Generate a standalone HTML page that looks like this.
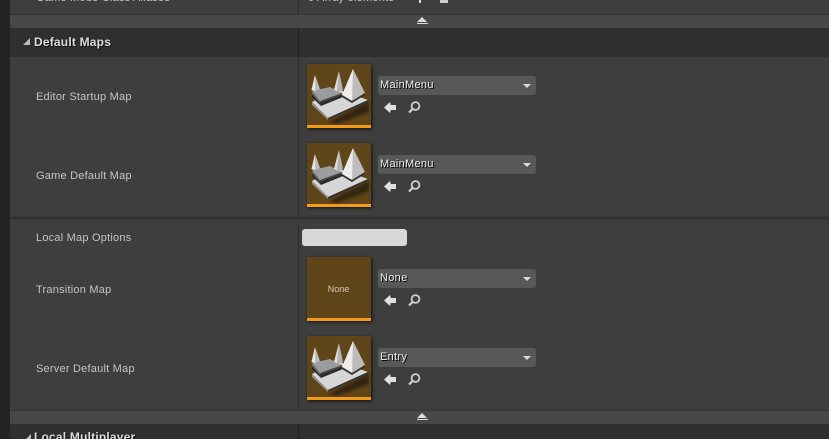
<!DOCTYPE html>
<html><head><meta charset="utf-8"><style>
html,body{margin:0;padding:0;background:#3e3e3e}
#p{position:relative;width:829px;height:439px;overflow:hidden;background:#3e3e3e;font-family:"Liberation Sans",sans-serif}
#p div,#p svg{position:absolute}
.l{left:36px;font-size:11px;color:#c4c4c4;line-height:14px;letter-spacing:.22px;white-space:nowrap}
.h{font-size:12px;font-weight:bold;color:#dcdcdc;text-shadow:1px 1px 0 #111;line-height:14px;white-space:nowrap;letter-spacing:.2px}
.c{left:378px;width:158px;height:19px;background:#585858;border-radius:3px}
.c span{position:absolute;left:2px;top:2px;font-size:11px;line-height:14px;letter-spacing:.3px;color:#eee;text-shadow:1px 1px 0 #000}
.c i{position:absolute;left:145px;top:8px;width:0;height:0;border-left:4.5px solid transparent;border-right:4.5px solid transparent;border-top:4px solid #ddd}
.t{left:307px;width:64px;height:64px;background:#5f4518;box-shadow:1px 1px 3px #111}
.o{left:0;bottom:0;width:64px;height:3px;background:#f39c1c}
.bar{left:10px;width:819px;height:13px;background:#484848;border-top:1px solid #333;border-radius:0 0 0 4px}
.tri{left:417px;width:0;height:0;border-left:5.5px solid transparent;border-right:5.5px solid transparent;border-bottom:5px solid #ddd}
.u{left:417px;width:11px;height:1px;background:#ddd}
</style></head><body><div id="p">
<svg width="0" height="0" style="left:0;top:0"><defs>
<filter id="bl"><feGaussianBlur stdDeviation="1.2"/></filter>
<g id="th">
<polygon points="22,58 62,38 62,48 30,60" fill="#1c1408" opacity=".65" filter="url(#bl)"/>
<polygon points="5,38 30,25 61,36 21,54" fill="#d6d6d6"/>
<polygon points="5,38 21,54 21,56 5,41" fill="#8e8e8e"/>
<polygon points="21,54 61,36 61,38 21,56" fill="#333"/>
<polygon points="5,30 14,38 36,30 36,33 14,42 5,33" fill="#2b2b2b"/>
<polygon points="5,27 23,23 35,29 13,37" fill="#9c9c9c"/>
<polygon points="5,27 13,37 13,39 5,30" fill="#6a6a6a"/>
<polygon points="13,37 35,29 35,31 13,39" fill="#444"/>
<polygon points="4.5,26 8,11 13,25 9,27" fill="#bcbcbc"/>
<polygon points="4.5,26 8,11 8,27" fill="#e6e6e6"/>
<polygon points="27,26 32,7 36,26 31,28" fill="#b2b2b2"/>
<polygon points="27,26 32,7 30,27" fill="#dcdcdc"/>
<polygon points="35,31 46,5 58,29 45,37" fill="#bdbdbd"/>
<polygon points="35,31 46,5 45,37" fill="#ececec"/>
<polygon points="35,31 45,37 58,29 58,31 45,39 35,33" fill="#2e2e2e"/>
</g>
<g id="ar"><polygon points="0,5.5 6,0 6.8,3 12,3 12,8 6.8,8 6,11" fill="#e0e0e0"/></g>
<g id="mg"><circle cx="7.5" cy="5" r="3.9" fill="none" stroke="#cfcfcf" stroke-width="1.8"/><line x1="4.5" y1="8" x2="1" y2="11.5" stroke="#cfcfcf" stroke-width="2.2"/></g>
</defs></svg>

<div style="left:0;top:0;width:10px;height:439px;background:#232323"></div>
<div style="left:298px;top:0;width:1px;height:14px;background:#2c2c2c"></div>
<div class="l" style="top:-9px">Game Mode Class Aliases</div>
<div class="l" style="left:308px;top:-9px">0 Array elements</div>
<div style="left:419px;top:-2px;width:2px;height:5px;background:#ddd"></div>
<div style="left:440px;top:-2px;width:8px;height:5px;background:#ccc"></div>

<div class="bar" style="top:14px"></div>
<div class="tri" style="top:17px"></div><div class="u" style="top:23px"></div>

<div style="left:10px;top:28px;width:819px;height:29px;background:#2f2f2f"></div>
<div style="left:298px;top:28px;width:1px;height:29px;background:#1f1f1f"></div>
<svg style="left:23px;top:38px" width="7" height="7"><polygon points="0,7 7,0 7,7" fill="#bbb"/></svg>
<div class="h" style="left:34px;top:35px">Default Maps</div>

<div style="left:298px;top:57px;width:1px;height:158px;background:#2c2c2c"></div>
<div style="left:10px;top:215px;width:819px;height:5px;background:linear-gradient(#3d3d3d,#363636 40%,#2e2e2e 70%,#3e3e3e)"></div>
<div style="left:298px;top:225px;width:1px;height:182px;background:#2c2c2c"></div>

<div class="l" style="top:90px">Editor Startup Map</div>
<div class="t" style="top:64px"><svg style="left:0;top:0" width="64" height="61"><use href="#th"/></svg><div class="o"></div></div>
<div class="c" style="top:76px"><span>MainMenu</span><i></i></div>
<svg style="left:384px;top:102px" width="13" height="12"><use href="#ar"/></svg>
<svg style="left:408px;top:101px" width="13" height="13"><use href="#mg"/></svg>

<div class="l" style="top:169px">Game Default Map</div>
<div class="t" style="top:143px"><svg style="left:0;top:0" width="64" height="61"><use href="#th"/></svg><div class="o"></div></div>
<div class="c" style="top:155px"><span>MainMenu</span><i></i></div>
<svg style="left:384px;top:181px" width="13" height="12"><use href="#ar"/></svg>
<svg style="left:408px;top:180px" width="13" height="13"><use href="#mg"/></svg>

<div class="l" style="top:231px">Local Map Options</div>
<div style="left:302px;top:229px;width:105px;height:17px;background:#d8d8d8;border-radius:3px"></div>

<div class="l" style="top:283px">Transition Map</div>
<div class="t" style="top:257px"><div style="left:0;top:26px;width:63px;text-align:center;font-size:9px;line-height:12px;color:#d4cbb8">None</div><div class="o"></div></div>
<div class="c" style="top:269px"><span>None</span><i></i></div>
<svg style="left:384px;top:295px" width="13" height="12"><use href="#ar"/></svg>
<svg style="left:408px;top:294px" width="13" height="13"><use href="#mg"/></svg>

<div class="l" style="top:362px">Server Default Map</div>
<div class="t" style="top:336px"><svg style="left:0;top:0" width="64" height="61"><use href="#th"/></svg><div class="o"></div></div>
<div class="c" style="top:348px"><span>Entry</span><i></i></div>
<svg style="left:384px;top:374px" width="13" height="12"><use href="#ar"/></svg>
<svg style="left:408px;top:373px" width="13" height="13"><use href="#mg"/></svg>

<div class="bar" style="top:410px"></div>
<div class="tri" style="top:413px"></div><div class="u" style="top:419px"></div>

<div style="left:10px;top:424px;width:819px;height:15px;background:#2f2f2f"></div>
<div style="left:298px;top:424px;width:1px;height:15px;background:#1f1f1f"></div>
<svg style="left:26px;top:434px" width="5" height="5"><polygon points="0,5 5,0 5,5" fill="#bbb"/></svg>
<div class="h" style="left:34px;top:430px">Local Multiplayer</div>
</div></body></html>
